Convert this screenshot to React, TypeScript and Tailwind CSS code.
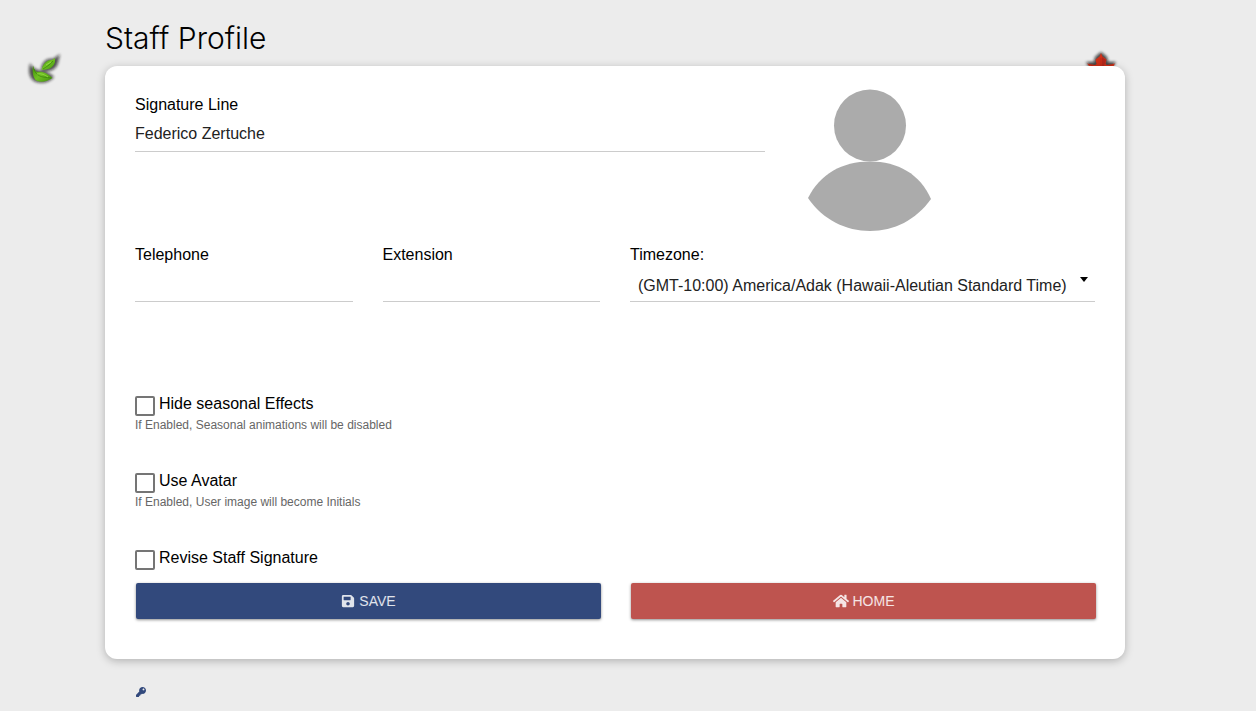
import { FaHome, FaKey, FaSave } from "react-icons/fa";

function GreenLeaves() {
  return (
    <svg aria-hidden="true" viewBox="0 0 40 40" className="absolute top-[50px] left-[24px] size-10">
      <defs>
        <linearGradient id="leaf" x1="0" y1="0" x2="1" y2="1">
          <stop offset="0" stopColor="#3f8a0c" />
          <stop offset="0.5" stopColor="#6fc022" />
          <stop offset="1" stopColor="#418f0c" />
        </linearGradient>
        <filter id="leafShadow" x="-40%" y="-40%" width="180%" height="180%">
          <feGaussianBlur stdDeviation="1.8" />
        </filter>
      </defs>
      <g filter="url(#leafShadow)" fill="#111" opacity="0.7">
        <path d="M6 13C8 17 11 20 19 21C24 22 28 25 30 27C26 32 19 34 12 32C5 29 4 22 6 13Z" />
        <path d="M17 20C18 12 22 8 29 9L36 4L34 13C32 20 25 23 17 20Z" />
      </g>
      <path d="M9 15.500C10 19 11 21 13 22C19 21 24 24 28.500 28C23 31.500 18 32.500 13 31C9 28.500 8 22 9 15.500Z" fill="url(#leaf)" />
      <path d="M17.500 19.500C19 14 23 9.500 28 10L31 8L31 12C30 17 25 20.500 17.500 19.500Z" fill="url(#leaf)" />
      <path d="M10 19C11 23 14 26 19 27L27 28M19 19C22 17 26 15 29 11" fill="none" stroke="#397f0b" strokeWidth="0.7" />
      <path d="M13 24C17 23 21 25 24 27M22 15L27 12" fill="none" stroke="#98dc48" strokeWidth="0.8" />
    </svg>
  );
}

function RedLeaf() {
  return (
    <svg aria-hidden="true" viewBox="0 0 40 40" className="absolute top-[48px] left-[1081px] size-10">
      <defs>
        <filter id="mapleShadow" x="-40%" y="-40%" width="180%" height="180%">
          <feGaussianBlur stdDeviation="1.6" />
        </filter>
      </defs>
      <path d="M20 4L26 9L27 14L35 14L30 22L20 34L10 22L5 14L13 14L14 9Z" fill="#111" opacity="0.75" filter="url(#mapleShadow)" />
      <path d="M20 5L21.500 8.500L25.500 11.500L24.500 16L26 17L34 15.500L32 19L34 22L26 26L20 33L14 26L6 22L9 19L6 15.500L14 17L15.500 16L14.500 11.500L18.500 8.500Z" fill="#cf3018" />
      <path d="M21 9L25 12L23 18L21 20Z" fill="#b3261a" />
      <path d="M20 10V30M20 22L8 16M20 22L32 16" fill="none" stroke="#9c2115" strokeWidth="0.4" />
    </svg>
  );
}

const label = "block h-6 pt-px text-base leading-6 text-black";
const field =
  "block h-9 w-full rounded-none border-b border-[#ccc] bg-transparent text-base text-[#222] outline-none focus:border-[#32497c]";

function TextField({ id, title, value }: { id: string; title: string; value?: string }) {
  return (
    <>
      <label htmlFor={id} className={label}>
        {title}
      </label>
      <input id={id} type="text" defaultValue={value} className={field} />
    </>
  );
}

function Toggle({ id, title, note }: { id: string; title: string; note?: string }) {
  return (
    <div>
      <label htmlFor={id} className="flex h-6 gap-1 text-base leading-6 text-black">
        <input
          id={id}
          type="checkbox"
          className="mt-1 size-5 shrink-0 appearance-none rounded-xs border-2 border-[#757575] bg-white checked:bg-[#32497c]"
        />
        {title}
      </label>
      {note && <p className="text-xs leading-[19px] text-[#666]">{note}</p>}
    </div>
  );
}

const action =
  "flex h-9 items-center justify-center gap-1 rounded-xs text-sm text-white/85 shadow-[0_1px_3px_rgba(0,0,0,0.45)]";

export default function App() {
  return (
    <div className="relative min-h-screen overflow-hidden bg-[#ececec] pr-[131px] pl-[105px] font-['Liberation_Sans',Arial,sans-serif]">
      <GreenLeaves />
      <RedLeaf />
      <h1 className="pt-[18px] pb-2 font-['Inter','Liberation_Sans',sans-serif] text-[30px] leading-10 font-light text-black">
        Staff Profile
      </h1>
      <main className="relative rounded-xl bg-white px-[30px] pt-[26px] pb-10 shadow-[0_2px_8px_rgba(0,0,0,0.25)]">
        <form onSubmit={(e) => e.preventDefault()}>
          <div className="grid grid-cols-12 gap-x-[30px]">
            <div className="col-span-8 h-[150px]">
              <TextField id="signature" title="Signature Line" value="Federico Zertuche" />
            </div>
            <div className="col-span-4 h-[150px]">
              <svg role="img" aria-label="User" viewBox="0 0 150 150" className="-mt-1.5 size-[150px]" fill="#ababab">
                <circle cx="75" cy="39.500" r="36" />
                <path d="M13 112C25 88 47 75.500 75 75.500C103 75.500 125 88 136 113C121 134 99 145 75 145C51 145 28 134 13 112Z" />
              </svg>
            </div>
            <div className="col-span-3 h-[150px]">
              <TextField id="telephone" title="Telephone" />
            </div>
            <div className="col-span-3 h-[150px]">
              <TextField id="extension" title="Extension" />
            </div>
            <div className="col-span-6 h-[150px]">
              <label htmlFor="timezone" className={label}>
                Timezone:
              </label>
              <div className="relative">
                <select id="timezone" className={`${field} appearance-none pt-1 pr-5 pl-2`}>
                  <option>(GMT-10:00) America/Adak (Hawaii-Aleutian Standard Time)</option>
                </select>
                <svg
                  aria-hidden="true"
                  viewBox="0 0 8 5"
                  className="pointer-events-none absolute top-[11px] right-[7px] h-[5px] w-2"
                >
                  <path d="M0 0H8L4 5Z" />
                </svg>
              </div>
            </div>
          </div>
          <div className="flex flex-col gap-[34px]">
            <Toggle id="hide-effects" title="Hide seasonal Effects" note="If Enabled, Seasonal animations will be disabled" />
            <Toggle id="use-avatar" title="Use Avatar" note="If Enabled, User image will become Initials" />
            <Toggle id="revise" title="Revise Staff Signature" />
          </div>
          <div className="-mr-px ml-px grid grid-cols-2 gap-[30px] pt-[13px]">
            <button type="submit" className={`${action} bg-[#32497c]`}>
              <FaSave aria-hidden="true" />
              SAVE
            </button>
            <a href="#home" className={`${action} bg-[#be544f]`}>
              <FaHome aria-hidden="true" className="size-4" />
              HOME
            </a>
          </div>
        </form>
      </main>
      <footer className="flex px-[31px] pt-7">
        <a href="#password" aria-label="Change password" className="text-[#32497c]">
          <FaKey className="size-[10px]" />
        </a>
      </footer>
    </div>
  );
}
